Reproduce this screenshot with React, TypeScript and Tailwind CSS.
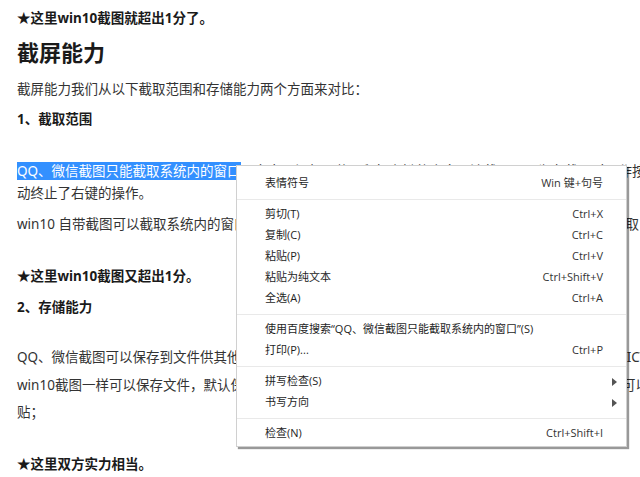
type MenuEntry = { label: string; keys?: string; sub?: boolean } | 'sep';

const menu: MenuEntry[] = [
  { label: '表情符号', keys: 'Win 键+句号' },
  'sep',
  { label: '剪切(T)', keys: 'Ctrl+X' },
  { label: '复制(C)', keys: 'Ctrl+C' },
  { label: '粘贴(P)', keys: 'Ctrl+V' },
  { label: '粘贴为纯文本', keys: 'Ctrl+Shift+V' },
  { label: '全选(A)', keys: 'Ctrl+A' },
  'sep',
  { label: '使用百度搜索“QQ、微信截图只能截取系统内的窗口”(S)' },
  { label: '打印(P)...', keys: 'Ctrl+P' },
  'sep',
  { label: '拼写检查(S)', sub: true },
  { label: '书写方向', sub: true },
  'sep',
  { label: '检查(N)', keys: 'Ctrl+Shift+I' },
];

function ContextMenu() {
  return (
    <div className="absolute left-[236px] top-[165px] w-[391px] border border-[#d0d0d0] bg-white pt-[7px] pb-[2px] font-['Open_Sans','Noto_Sans_CJK_SC',sans-serif] text-[11px] text-[#1e1e1e] shadow-[2px_2px_1px_rgba(0,0,0,0.4)]">
      {menu.map((m, i) =>
        m === 'sep' ? (
          <div key={i} className="flex h-[10px] items-center">
            <div className="h-px w-full bg-[#e9e9e9]" />
          </div>
        ) : (
          <div key={i} className="relative flex h-[21px] items-center justify-between pl-[28px] pr-[23px]">
            <span>{m.label}</span>
            {m.keys && <span className="text-[#333]">{m.keys}</span>}
            {m.sub && (
              <svg className="absolute right-[9px] top-[7px]" width="5" height="8" viewBox="0 0 5 8">
                <path d="M0 0 L5 4 L0 8 Z" fill="#555" />
              </svg>
            )}
          </div>
        ),
      )}
    </div>
  );
}

export default function App() {
  return (
    <div className="relative h-[477px] w-[640px] overflow-hidden bg-white font-['Noto_Sans','Noto_Sans_CJK_SC',sans-serif]">
      <div className="w-[780px] pl-[17px] text-[13.5px] leading-[22px] text-[#333]">
        <p className="pt-[7px] font-bold text-[#1a1a1a]">★这里win10截图就超出1分了。</p>
        <h2 className="mt-[7px] text-[22px] leading-[32px] font-bold text-[#1a1a1a]">截屏能力</h2>
        <p className="mt-[10px]">截屏能力我们从以下截取范围和存储能力两个方面来对比：</p>
        <p className="mt-[8px] font-bold text-[#1a1a1a]">1、截取范围</p>

        <p className="mt-[30px]">
          <span className="block whitespace-nowrap">
            <span className="bg-[#3390ff] text-white">QQ、微信截图只能截取系统内的窗口</span>
            ，文本、视频屏幕、鼠标右键的内容无法截取，因为在截图时只作按键就会自
          </span>
          <span className="block">动终止了右键的操作。</span>
        </p>
        <p className="mt-[9px] whitespace-nowrap">
          win10 自带截图可以截取系统内的窗口、文本、视频屏幕，甚至连鼠标右键弹出的菜单内容也都可以截取；
        </p>

        <p className="mt-[30px] font-bold text-[#1a1a1a]">★这里win10截图又超出1分。</p>
        <p className="mt-[9px] font-bold text-[#1a1a1a]">2、存储能力</p>

        <p className="mt-[28px] whitespace-nowrap">
          QQ、微信截图可以保存到文件供其他程序使用，默认保存在系统图片文件夹，也就是在我的电脑中的PICTURES
        </p>
        <p className="mt-[4px] leading-[27px]">
          <span className="block whitespace-nowrap">
            win10截图一样可以保存文件，默认保存在系统的剪贴板中，需要时再打开其他的程序窗口，也都同样可以直接粘
          </span>
          <span className="block">贴；</span>
        </p>

        <p className="mt-[27px] font-bold text-[#1a1a1a]">★这里双方实力相当。</p>
      </div>
      <ContextMenu />
    </div>
  );
}
